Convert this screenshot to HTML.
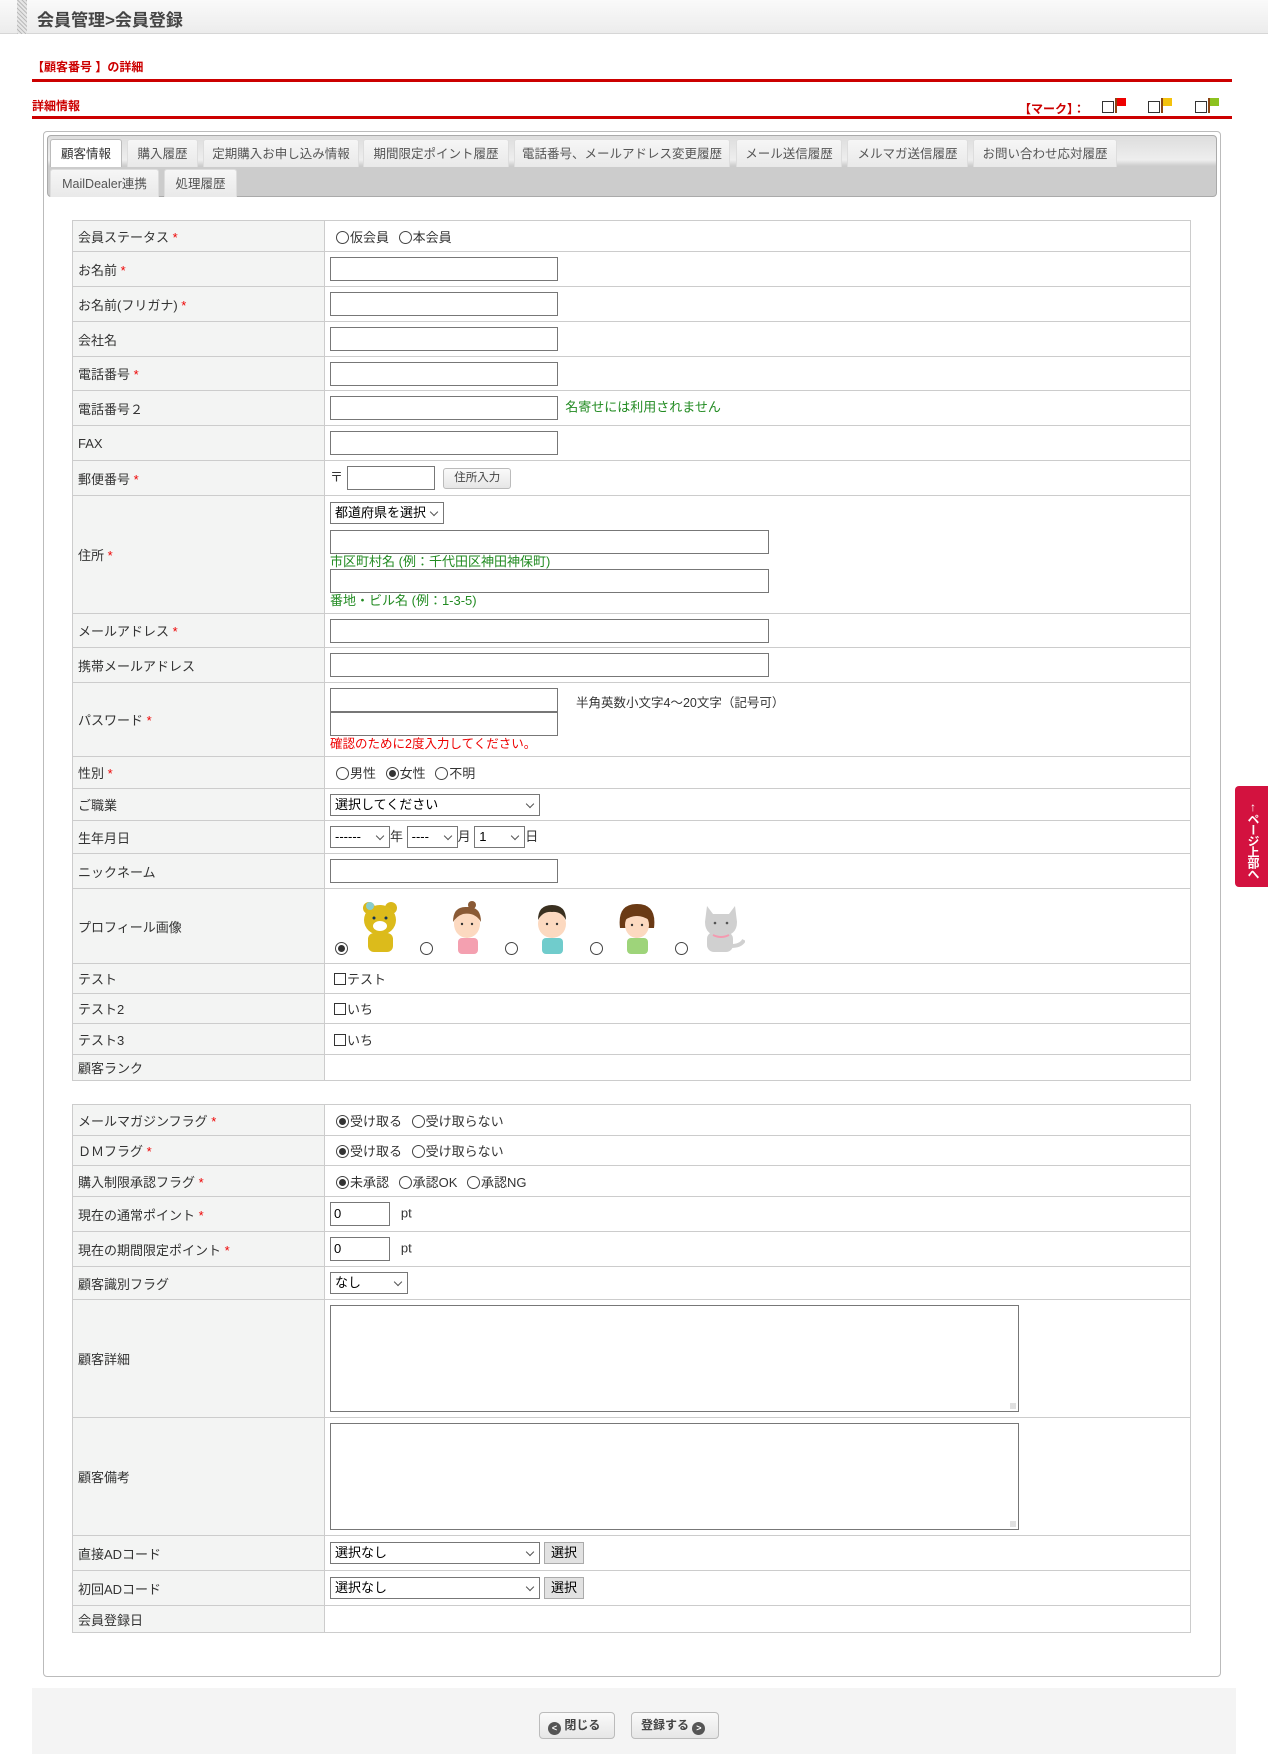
<!DOCTYPE html>
<html><head><meta charset="utf-8"><style>
*{box-sizing:border-box}
body{margin:0;width:1268px;height:1754px;position:relative;background:#fff;font-family:"Liberation Sans","Noto Sans CJK JP",sans-serif;font-size:13px;color:#333;overflow:hidden}
.abs{position:absolute}
.hdr{left:0;top:0;width:1268px;height:34px;background:linear-gradient(#fafafa,#ececec);border-bottom:1px solid #d6d6d6}
.stripe{left:17px;top:0;width:10px;height:34px;background:repeating-linear-gradient(45deg,#bbb 0 1px,#e6e6e6 1px 3px)}
.title{left:37px;top:6px;font-size:17px;font-weight:bold;color:#444}
.red{color:#c00;font-weight:bold;font-size:12px}
.line{background:#c00;height:3px}
.box{left:43px;top:131px;width:1178px;height:1546px;border:1px solid #bbb;border-radius:4px}
.tabbar{left:47px;top:135px;width:1170px;height:62px;border:1px solid #aaa;border-radius:4px;background:linear-gradient(#ddd,#eee 40%,#ccc 50%,#ccc)}
.tab{position:absolute;height:28px;background:linear-gradient(#f6f6f6,#e9e9e9);border:1px solid #ddd;border-bottom:none;border-radius:3px 3px 0 0;font-size:12.5px;color:#555;text-align:center;line-height:28px;white-space:nowrap}
.tab.on{background:#fff;color:#333;border-color:#bbb}
table{position:absolute;left:72px;width:1119px;border-collapse:collapse;table-layout:fixed}
td{border:1px solid #ccc;padding:0 0 0 5px;vertical-align:middle;font-size:13px;color:#333}
td.l{width:252px;background:#f3f4f3;padding-left:5px}
.req{color:#e00}
.in{display:inline-block;border:1px solid #777;height:24px;width:228px;vertical-align:middle;background:#fff;font-size:13px;line-height:22px;padding-left:3px;color:#000}
.lg{width:439px}
.sel{display:inline-block;border:1px solid #777;height:22px;vertical-align:middle;background:#fff;position:relative;font-size:13px;line-height:20px;padding-left:4px;color:#000}
.sel::after{content:"";position:absolute;right:6px;top:6px;width:5px;height:5px;border-right:1px solid #555;border-bottom:1px solid #555;transform:rotate(45deg)}
.r{display:inline-block;width:13px;height:13px;border:1px solid #444;border-radius:50%;vertical-align:-2px;margin:0 1px 0 6px;position:relative;background:#fff}
.r.on::after{content:"";position:absolute;left:2px;top:2px;width:7px;height:7px;border-radius:50%;background:#333}
.cb{display:inline-block;width:12px;height:12px;border:1px solid #333;vertical-align:-1px;margin:0 1px 0 4px}
.g{color:#228b22}
.btn{display:inline-block;border:1px solid #bbb;border-radius:3px;background:linear-gradient(#fafafa,#e6e6e6);font-size:11.5px;height:21px;line-height:19px;padding:0 10px;vertical-align:middle;color:#444}
.gbtn{display:inline-block;border:1px solid #aaa;background:#e2e2e2;height:22px;line-height:20px;padding:0 6px;vertical-align:middle;font-size:13px;margin-left:4px;color:#000}
.ta{border:1px solid #777;width:689px;height:107px;position:relative}
.ta::after{content:"";position:absolute;right:2px;bottom:2px;width:6px;height:6px;background:radial-gradient(#999 0.7px,transparent 0.8px) 0 0/2px 2px}
.av{position:absolute}
</style></head><body>
<div class="abs hdr"></div><div class="abs stripe"></div>
<div class="abs title">会員管理&gt;会員登録</div>
<div class="abs red" style="left:32px;top:58px">【顧客番号 】の詳細</div>
<div class="abs line" style="left:32px;top:79px;width:1200px"></div>
<div class="abs red" style="left:32px;top:97px">詳細情報</div>
<div class="abs line" style="left:32px;top:116px;width:1200px"></div>
<div class="abs red" style="left:1019px;top:100px">【マーク】：</div>
<svg class="abs" style="left:1101px;top:97px" width="130" height="18">
<rect x="1.5" y="4.5" width="11" height="11" fill="#fff" stroke="#333"/><rect x="14" y="1" width="2" height="15" fill="#8b4513"/><rect x="16" y="1" width="9" height="8" fill="#e00"/>
<rect x="47.5" y="4.5" width="11" height="11" fill="#fff" stroke="#333"/><rect x="60" y="1" width="2" height="15" fill="#8b4513"/><rect x="62" y="1" width="9" height="8" fill="#f4c20d"/>
<rect x="94.5" y="4.5" width="11" height="11" fill="#fff" stroke="#333"/><rect x="107" y="1" width="2" height="15" fill="#8b4513"/><rect x="109" y="1" width="9" height="8" fill="#8dc21f"/>
</svg>
<div class="abs box"></div>
<div class="abs tabbar">
<div class="tab on" style="left:2px;top:3px;width:72px">顧客情報</div>
<div class="tab" style="left:79px;top:3px;width:71px">購入履歴</div>
<div class="tab" style="left:155px;top:3px;width:156px">定期購入お申し込み情報</div>
<div class="tab" style="left:315px;top:3px;width:146px">期間限定ポイント履歴</div>
<div class="tab" style="left:466px;top:3px;width:216px">電話番号、メールアドレス変更履歴</div>
<div class="tab" style="left:688px;top:3px;width:106px">メール送信履歴</div>
<div class="tab" style="left:799px;top:3px;width:121px">メルマガ送信履歴</div>
<div class="tab" style="left:925px;top:3px;width:144px">お問い合わせ応対履歴</div>
<div class="tab" style="left:2px;top:33px;width:109px">MailDealer連携</div>
<div class="tab" style="left:116px;top:33px;width:73px">処理履歴</div>
</div>

<table style="top:220px">
<tr style="height:31px"><td class="l">会員ステータス <span class="req">*</span></td><td><span class="r"></span>仮会員 <span class="r"></span>本会員</td></tr>
<tr style="height:35px"><td class="l">お名前 <span class="req">*</span></td><td><span class="in"></span></td></tr>
<tr style="height:35px"><td class="l">お名前(フリガナ) <span class="req">*</span></td><td><span class="in"></span></td></tr>
<tr style="height:35px"><td class="l">会社名</td><td><span class="in"></span></td></tr>
<tr style="height:34px"><td class="l">電話番号 <span class="req">*</span></td><td><span class="in"></span></td></tr>
<tr style="height:35px"><td class="l">電話番号２</td><td><span class="in"></span> <span class="g">&nbsp;名寄せには利用されません</span></td></tr>
<tr style="height:35px"><td class="l">FAX</td><td><span class="in"></span></td></tr>
<tr style="height:35px"><td class="l">郵便番号 <span class="req">*</span></td><td>〒 <span class="in" style="width:88px"></span> <span class="btn" style="margin-left:5px">住所入力</span></td></tr>
<tr style="height:118px"><td class="l">住所 <span class="req">*</span></td><td style="line-height:15px"><span class="sel" style="width:114px">都道府県を選択</span><br><span class="in lg" style="margin-top:6px"></span><br><span class="g">市区町村名 (例：千代田区神田神保町)</span><br><span class="in lg"></span><br><span class="g">番地・ビル名 (例：1-3-5)</span></td></tr>
<tr style="height:34px"><td class="l">メールアドレス <span class="req">*</span></td><td><span class="in lg"></span></td></tr>
<tr style="height:35px"><td class="l">携帯メールアドレス</td><td><span class="in lg"></span></td></tr>
<tr style="height:74px"><td class="l">パスワード <span class="req">*</span></td><td style="position:relative"><div class="abs" style="left:5px;top:5px"><span class="in" style="display:block"></span><span class="in" style="display:block"></span><div style="color:#e00;font-size:12.5px;line-height:16px">確認のために2度入力してください。</div></div><div class="abs" style="left:251px;top:9px;font-size:12.5px">半角英数小文字4～20文字（記号可）</div></td></tr>
<tr style="height:32px"><td class="l">性別 <span class="req">*</span></td><td><span class="r"></span>男性 <span class="r on"></span>女性 <span class="r"></span>不明</td></tr>
<tr style="height:32px"><td class="l">ご職業</td><td><span class="sel" style="width:210px">選択してください</span></td></tr>
<tr style="height:33px"><td class="l">生年月日</td><td><span class="sel" style="width:60px">------</span>年 <span class="sel" style="width:51px">----</span>月 <span class="sel" style="width:51px">1</span>日</td></tr>
<tr style="height:35px"><td class="l">ニックネーム</td><td><span class="in"></span></td></tr>
<tr style="height:75px"><td class="l">プロフィール画像</td><td></td></tr>
<tr style="height:30px"><td class="l">テスト</td><td><span class="cb"></span>テスト</td></tr>
<tr style="height:30px"><td class="l">テスト2</td><td><span class="cb"></span>いち</td></tr>
<tr style="height:31px"><td class="l">テスト3</td><td><span class="cb"></span>いち</td></tr>
<tr style="height:26px"><td class="l">顧客ランク</td><td></td></tr>
</table>

<span class="r on" style="position:absolute;left:335px;top:942px;margin:0"></span>
<span class="r" style="position:absolute;left:420px;top:942px;margin:0"></span>
<span class="r" style="position:absolute;left:505px;top:942px;margin:0"></span>
<span class="r" style="position:absolute;left:590px;top:942px;margin:0"></span>
<span class="r" style="position:absolute;left:675px;top:942px;margin:0"></span>
<svg class="av" style="left:360px;top:900px" width="42" height="52"><circle cx="9" cy="8" r="6" fill="#d9b71a"/><circle cx="31" cy="8" r="6" fill="#d9b71a"/><ellipse cx="20" cy="20" rx="16" ry="15" fill="#dcbb1b"/><ellipse cx="20" cy="26" rx="7" ry="5" fill="#fff"/><circle cx="14" cy="18" r="1.5" fill="#135"/><circle cx="26" cy="18" r="1.5" fill="#135"/><rect x="8" y="33" width="25" height="19" rx="6" fill="#dcbb1b"/><circle cx="10" cy="6" r="4" fill="#8cc"/></svg>
<svg class="av" style="left:449px;top:900px" width="36" height="54"><rect x="9" y="38" width="20" height="16" rx="4" fill="#f4a0b0"/><ellipse cx="18" cy="24" rx="13" ry="14" fill="#fcd9c0"/><path d="M4 22 Q4 6 18 7 Q32 6 32 22 Q26 12 14 14 Q8 16 4 22Z" fill="#8a5a35"/><circle cx="23" cy="5" r="4" fill="#8a5a35"/><circle cx="13" cy="24" r="1.2" fill="#333"/><circle cx="23" cy="24" r="1.2" fill="#333"/></svg>
<svg class="av" style="left:533px;top:900px" width="38" height="54"><rect x="9" y="38" width="21" height="16" rx="4" fill="#70cccc"/><ellipse cx="19" cy="24" rx="14" ry="14" fill="#fcd9c0"/><path d="M5 20 Q5 5 19 5 Q33 5 33 20 Q28 11 19 12 Q10 11 5 20Z" fill="#3a3020"/><circle cx="14" cy="24" r="1.2" fill="#333"/><circle cx="24" cy="24" r="1.2" fill="#333"/></svg>
<svg class="av" style="left:617px;top:900px" width="40" height="54"><rect x="10" y="38" width="21" height="16" rx="4" fill="#9ed47a"/><path d="M3 28 Q0 4 20 4 Q40 4 37 28 Z" fill="#6a3a15"/><ellipse cx="20" cy="25" rx="12" ry="13" fill="#fcd9c0"/><path d="M8 20 Q14 8 28 12 Q32 16 32 20 Q20 12 8 20Z" fill="#6a3a15"/><circle cx="15" cy="25" r="1.2" fill="#333"/><circle cx="25" cy="25" r="1.2" fill="#333"/></svg>
<svg class="av" style="left:701px;top:900px" width="44" height="54"><path d="M6 6 L12 14 L28 14 L34 6 L36 22 Q36 36 20 36 Q4 36 4 22Z" fill="#d0d0d0"/><rect x="6" y="32" width="26" height="20" rx="7" fill="#d0d0d0"/><path d="M30 46 Q40 46 43 40" stroke="#d0d0d0" stroke-width="4" fill="none"/><circle cx="14" cy="23" r="1.3" fill="#555"/><circle cx="26" cy="23" r="1.3" fill="#555"/><path d="M12 35 Q20 39 28 35" stroke="#f49ab0" stroke-width="2" fill="none"/></svg>

<table style="top:1104px">
<tr style="height:31px"><td class="l">メールマガジンフラグ <span class="req">*</span></td><td><span class="r on"></span>受け取る <span class="r"></span>受け取らない</td></tr>
<tr style="height:30px"><td class="l">ＤＭフラグ <span class="req">*</span></td><td><span class="r on"></span>受け取る <span class="r"></span>受け取らない</td></tr>
<tr style="height:31px"><td class="l">購入制限承認フラグ <span class="req">*</span></td><td><span class="r on"></span>未承認 <span class="r"></span>承認OK <span class="r"></span>承認NG</td></tr>
<tr style="height:35px"><td class="l">現在の通常ポイント <span class="req">*</span></td><td><span class="in" style="width:60px">0</span>&nbsp;&nbsp; pt</td></tr>
<tr style="height:35px"><td class="l">現在の期間限定ポイント <span class="req">*</span></td><td><span class="in" style="width:60px">0</span>&nbsp;&nbsp; pt</td></tr>
<tr style="height:33px"><td class="l">顧客識別フラグ</td><td><span class="sel" style="width:78px">なし</span></td></tr>
<tr style="height:118px"><td class="l">顧客詳細</td><td><div class="ta"></div></td></tr>
<tr style="height:118px"><td class="l">顧客備考</td><td><div class="ta"></div></td></tr>
<tr style="height:35px"><td class="l">直接ADコード</td><td><span class="sel" style="width:210px">選択なし</span><span class="gbtn">選択</span></td></tr>
<tr style="height:35px"><td class="l">初回ADコード</td><td><span class="sel" style="width:210px">選択なし</span><span class="gbtn">選択</span></td></tr>
<tr style="height:27px"><td class="l">会員登録日</td><td></td></tr>
</table>

<div class="abs" style="left:32px;top:1688px;width:1204px;height:66px;background:#f4f4f4"></div>
<div class="abs btn" style="left:539px;top:1712px;width:76px;height:27px;line-height:25px;font-weight:bold;font-size:12px;padding:0 0 0 8px;border-radius:4px"><span style="display:inline-block;width:13px;height:13px;border-radius:50%;background:#555;color:#fff;font-size:9px;line-height:13px;text-align:center;vertical-align:-2px">&lt;</span> 閉じる</div>
<div class="abs btn" style="left:631px;top:1712px;width:88px;height:27px;line-height:25px;font-weight:bold;font-size:12px;padding:0 0 0 9px;border-radius:4px">登録する <span style="display:inline-block;width:13px;height:13px;border-radius:50%;background:#555;color:#fff;font-size:9px;line-height:13px;text-align:center;vertical-align:-2px">&gt;</span></div>
<div class="abs" style="left:1235px;top:786px;width:33px;height:101px;background:#d3123f;border-radius:4px 0 0 4px;color:#fff;font-weight:bold;font-size:12px;writing-mode:vertical-rl;text-orientation:upright;text-align:center;line-height:30px;padding-top:5px;letter-spacing:-1px">↑ページ上部へ</div>
</body></html>
